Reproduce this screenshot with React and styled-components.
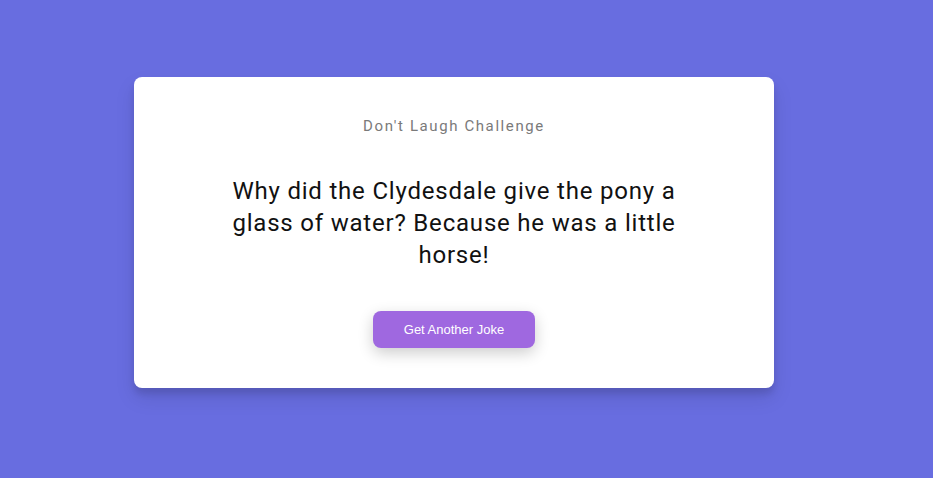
import React from "react";
import styled, { createGlobalStyle } from "styled-components";

const Global = createGlobalStyle`
  html, body { margin: 0; padding: 0; }
  body {
    background: #686de0;
    font-family: Roboto, "Noto Sans", sans-serif;
  }
`;

const Page = styled.div`
  min-height: 100vh;
  box-sizing: border-box;
  display: flex;
  align-items: center;
  justify-content: center;
  padding: 0 25px 13px 0;
`;

const Card = styled.div`
  width: 640px;
  box-sizing: border-box;
  background: #fff;
  border-radius: 8px;
  box-shadow: 0 10px 20px rgba(0, 0, 0, 0.1), 0 6px 6px rgba(0, 0, 0, 0.1);
  padding: 40px 20px 40px;
  display: flex;
  flex-direction: column;
  align-items: center;
  text-align: center;
`;

const Title = styled.h3`
  margin: 0;
  font-size: 15px;
  font-weight: 400;
  letter-spacing: 1.6px;
  color: #7a7a7a;
  line-height: 18px;
`;

const Joke = styled.div`
  margin: 40px 0 40px;
  max-width: 470px;
  font-size: 24px;
  line-height: 32px;
  letter-spacing: 0.8px;
  color: #111;
`;

const Button = styled.button`
  width: 162px;
  height: 37px;
  border: 0;
  border-radius: 8px;
  background: #9f68e0;
  color: #fff;
  font-family: "Liberation Sans", Arial, sans-serif;
  font-size: 13px;
  cursor: pointer;
  box-shadow: 0 5px 15px rgba(0, 0, 0, 0.2);
`;

export default function App() {
  return (
    <>
      <Global />
      <Page>
        <Card>
          <Title>Don't Laugh Challenge</Title>
          <Joke>
            Why did the Clydesdale give the pony a glass of water? Because he was a little horse!
          </Joke>
          <Button>Get Another Joke</Button>
        </Card>
      </Page>
    </>
  );
}
